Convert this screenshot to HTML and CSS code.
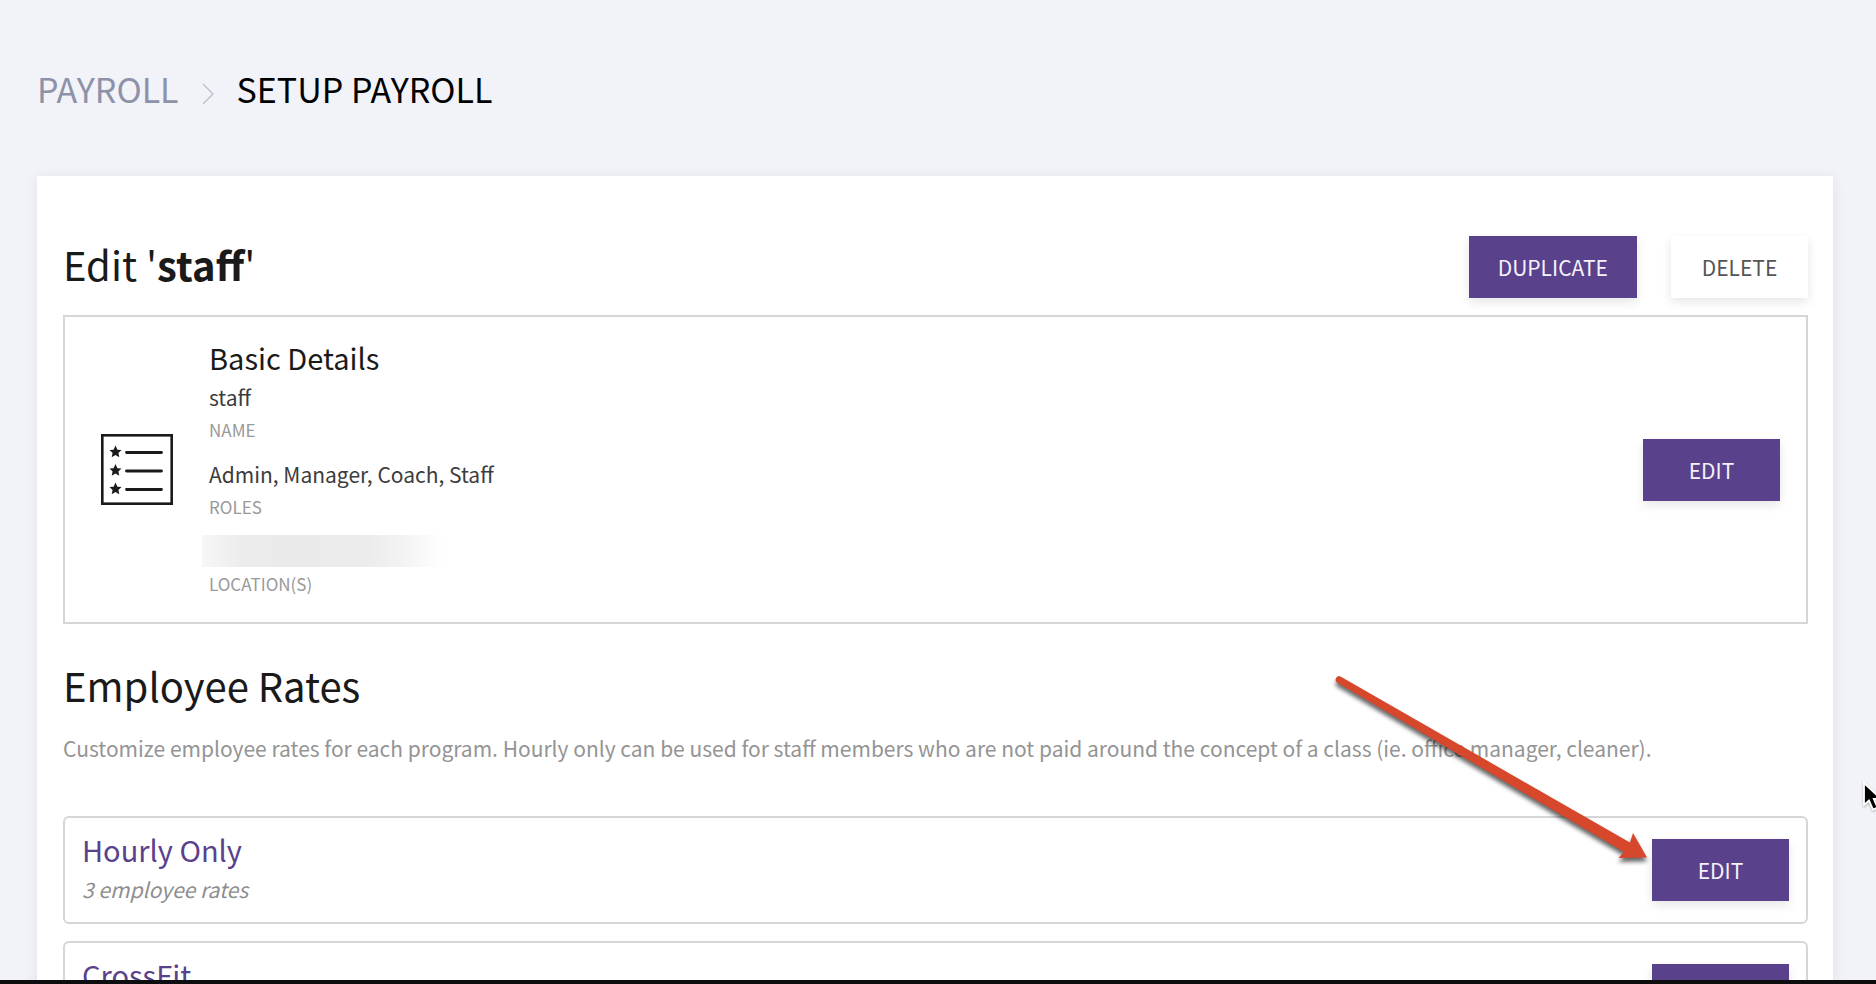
FILE: index.html
```html
<!DOCTYPE html>
<html lang="en">
<head>
<meta charset="utf-8">
<title>Setup Payroll</title>
<link rel="stylesheet" href="styles.css">
</head>
<body>
<div class="app">
  <div class="page">
    <nav class="breadcrumb" aria-label="Breadcrumb">
      <a class="crumb-link" href="#">PAYROLL</a>
      <svg class="crumb-sep" viewBox="0 0 12 22" aria-hidden="true"><path d="M1 1 11 11 1 21" fill="none" stroke="#b9bccb" stroke-width="1.2"/></svg>
      <span class="crumb-current">SETUP PAYROLL</span>
    </nav>

    <main class="panel">
      <header class="panel-head">
        <h1 class="title">Edit '<strong>staff</strong>'</h1>
        <div class="actions">
          <button class="btn btn-primary" type="button">DUPLICATE</button>
          <button class="btn btn-plain" type="button">DELETE</button>
        </div>
      </header>

      <section class="details">
        <svg class="details-icon" viewBox="0 0 72 71" aria-hidden="true">
          <rect x="1.3" y="1.3" width="69.4" height="68.4" fill="none" stroke="#1a1a1a" stroke-width="2.6"/>
          <g stroke="#1a1a1a" stroke-width="2.8" stroke-linecap="round">
            <path d="M25.500 18.500H60.500M25.500 37H60.500M25.500 55.500H60.500"/>
          </g>
          <defs><path id="star" d="M0-6.500 1.900-2.200 6-1.900 2.900.9 3.800 5.200 0 3-3.800 5.200-2.900.9-6-1.900-1.900-2.200Z"/></defs>
          <g fill="#1a1a1a">
            <use href="#star" x="14.500" y="18"/>
            <use href="#star" x="14.500" y="36.500"/>
            <use href="#star" x="14.500" y="55"/>
          </g>
        </svg>
        <div class="details-body">
          <h2 class="subtitle">Basic Details</h2>
          <dl class="fields">
            <div class="field"><dt class="label">NAME</dt><dd class="value">staff</dd></div>
            <div class="field"><dt class="label">ROLES</dt><dd class="value">Admin, Manager, Coach, Staff</dd></div>
            <div class="field"><dt class="label">LOCATION(S)</dt><dd class="value"><span class="redacted"></span></dd></div>
          </dl>
        </div>
        <button class="btn btn-primary" type="button">EDIT</button>
      </section>

      <section class="rates">
        <h2 class="title">Employee Rates</h2>
        <p class="intro">Customize employee rates for each program. Hourly only can be used for staff members who are not paid around the concept of a class (ie. office manager, cleaner).</p>
        <ul class="rate-list">
          <li class="rate">
            <div class="rate-body">
              <h3 class="rate-name">Hourly Only</h3>
              <p class="rate-note">3 employee rates</p>
            </div>
            <button class="btn btn-primary" type="button">EDIT</button>
          </li>
          <li class="rate">
            <div class="rate-body">
              <h3 class="rate-name">CrossFit</h3>
            </div>
            <button class="btn btn-primary" type="button" aria-label="Edit CrossFit"></button>
          </li>
        </ul>
      </section>

      <svg class="arrow" viewBox="0 0 340 210" aria-hidden="true">
        <path d="M20.500 16.500 L310 182.500 L313 173 L327 197.500 L298.500 198 L304 192 L17 22.500 A3.500 3.500 0 0 1 20.500 16.500Z" fill="#d6472b"/>
      </svg>
    </main>
  </div>
  <div class="bottom-bar"></div>
</div>
<svg class="pointer" viewBox="0 0 14 32" aria-hidden="true">
  <path d="M2 2V24L7 19.500 11 28.500 15.500 26.500 11.800 18H19Z" fill="#000" stroke="#fff" stroke-width="1.800"/>
</svg>
</body>
</html>
```

FILE: styles.css
```css
* { box-sizing: border-box; }

body,
h1, h2, h3, p, ul, dl, dd { margin: 0; padding: 0; }

body {
  background: #f2f3f8;
  color: #1a1a1a;
  font-family: "Noto Sans CJK SC", "Noto Sans", sans-serif;
  font-size: 21px;
  line-height: 40px;
}

.app {
  display: flex;
  flex-direction: column;
  height: 100vh;
  overflow: hidden;
}

.page {
  flex: 1;
  min-height: 0;
  overflow: hidden;
  padding: 0 43px 0 37px;
}

.bottom-bar {
  flex: none;
  height: 4px;
  background: #0d0c0e;
}

.breadcrumb {
  display: flex;
  align-items: center;
  gap: 23px;
  padding: 65px 0 63px;
  font-size: 34px;
  line-height: 48px;
}

.crumb-link { color: #8d92a9; text-decoration: none; }
.crumb-sep { width: 12px; height: 22px; margin-top: 10px; }
.crumb-current { color: #000; }

.panel {
  position: relative;
  padding: 60px 25px 60px 26px;
  background: #fff;
  box-shadow: 0 2px 12px rgba(60, 50, 110, 0.09);
}

.panel-head {
  display: flex;
  justify-content: space-between;
  align-items: flex-start;
  margin-bottom: 17px;
}

.title {
  font-size: 40px;
  font-weight: 400;
  line-height: 56px;
}

.actions { display: flex; gap: 34px; }

.btn {
  flex: none;
  min-width: 137px;
  height: 62px;
  padding: 0 29px;
  border: 0;
  font: inherit;
  box-shadow: 0 4px 10px rgba(0, 0, 0, 0.1);
}

.btn-primary { background: #59418c; color: #f5f2fa; }
.btn-plain { background: #fff; color: #555; }

.details {
  display: flex;
  align-items: center;
  gap: 36px;
  padding: 20px 26px 20px 36px;
  border: 2px solid #d6d6d6;
}

.details-icon { width: 72px; height: 71px; flex: none; }
.details-body { flex: 1; padding-bottom: 6px; }

.subtitle,
.rate-name {
  font-size: 29px;
  font-weight: 400;
  line-height: 40px;
}

.fields { display: grid; gap: 12px; }
.field { display: flex; flex-direction: column-reverse; }
.value { height: 40px; color: #3c3c3c; }
.label { color: #999; font-size: 17px; line-height: 25px; }

.redacted {
  display: block;
  width: 247px;
  height: 32px;
  margin: 4px -7px;
  background: linear-gradient(90deg, #f7f7f7, #ececec 16%, #eaeaea 35%, #ececec 68%, #f3f3f3 81%, #fdfdfd 95%, #fff);
}

.rates { margin-top: 33px; }
.intro { margin: 15px 0 48px; color: #949494; }

.rate-list { display: grid; gap: 17px; list-style: none; }

.rate {
  display: flex;
  justify-content: space-between;
  align-items: center;
  min-height: 108px;
  padding: 11px 17px;
  border: 2px solid #d6d6d6;
  border-radius: 6px;
}

.rate-body { min-height: 82px; }
.rate-name { color: #59418c; }
.rate-note { color: #8e8e8e; font-style: italic; }

.arrow {
  position: absolute;
  top: 484px;
  right: 173px;
  width: 340px;
  height: 210px;
  filter: drop-shadow(0 4px 2px rgba(0, 0, 0, 0.6));
}

.pointer {
  position: fixed;
  top: 781px;
  right: 0;
  width: 14px;
  height: 32px;
  filter: drop-shadow(0 1px 1px rgba(0, 0, 0, 0.3));
}
```
